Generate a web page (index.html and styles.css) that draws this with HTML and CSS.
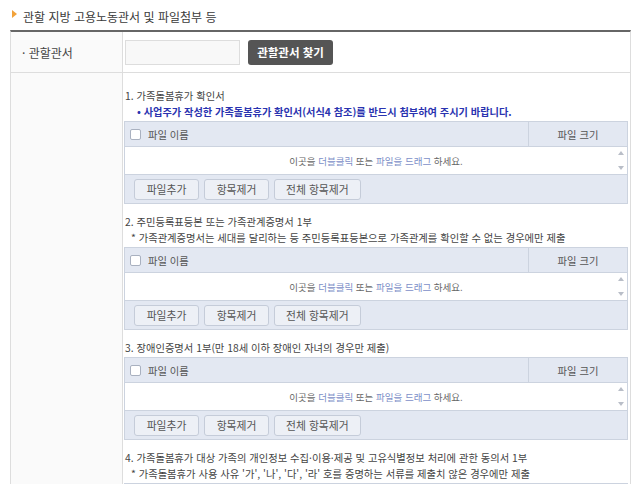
FILE: index.html
```html
<!DOCTYPE html>
<html lang="ko">
<head>
    <meta charset="UTF-8">
    <title>관할 지방 고용노동관서 및 파일첨부 등</title>
    <link rel="stylesheet" href="styles.css">
</head>
<body>
    <div class="page">
        <h2 class="sec-title">
            <svg class="bullet" width="5" height="8" viewBox="0 0 5 8"><polygon points="0,0 5,4 0,8" fill="#f2a23a"/></svg>
            관할 지방 고용노동관서 및 파일첨부 등
        </h2>

        <div class="form-table">
            <div class="row row-office">
                <div class="th">· 관할관서</div>
                <div class="td">
                    <input type="text" class="office-input">
                    <button type="button" class="btn-dark">관할관서 찾기</button>
                </div>
            </div>

            <div class="row">
                <div class="th"></div>
                <div class="td files">
                    <div class="doc">
                        <p class="doc-title">1. 가족돌봄휴가 확인서</p>
                        <p class="doc-note strong">• 사업주가 작성한 가족돌봄휴가 확인서(서식4 참조)를 반드시 첨부하여 주시기 바랍니다.</p>
                        <div class="uploader">
                            <div class="up-head">
                                <div class="chk-col"><span class="chk"></span></div>
                                <div class="name-col">파일 이름</div>
                                <div class="size-col">파일 크기</div>
                            </div>
                            <div class="up-drop">
                                <span>이곳을 <em>더블클릭</em> 또는 <em>파일을 드래그</em> 하세요.</span>
                                <div class="scroll"><i class="up"></i><i class="down"></i></div>
                            </div>
                            <div class="up-bar">
                                <button type="button">파일추가</button>
                                <button type="button">항목제거</button>
                                <button type="button">전체 항목제거</button>
                            </div>
                        </div>
                    </div>

                    <div class="doc">
                        <p class="doc-title">2. 주민등록표등본 또는 가족관계증명서 1부</p>
                        <p class="doc-note">* 가족관계증명서는 세대를 달리하는 등 주민등록표등본으로 가족관계를 확인할 수 없는 경우에만 제출</p>
                        <div class="uploader">
                            <div class="up-head">
                                <div class="chk-col"><span class="chk"></span></div>
                                <div class="name-col">파일 이름</div>
                                <div class="size-col">파일 크기</div>
                            </div>
                            <div class="up-drop">
                                <span>이곳을 <em>더블클릭</em> 또는 <em>파일을 드래그</em> 하세요.</span>
                                <div class="scroll"><i class="up"></i><i class="down"></i></div>
                            </div>
                            <div class="up-bar">
                                <button type="button">파일추가</button>
                                <button type="button">항목제거</button>
                                <button type="button">전체 항목제거</button>
                            </div>
                        </div>
                    </div>

                    <div class="doc">
                        <p class="doc-title">3. 장애인증명서 1부(만 18세 이하 장애인 자녀의 경우만 제출)</p>
                        <div class="uploader">
                            <div class="up-head">
                                <div class="chk-col"><span class="chk"></span></div>
                                <div class="name-col">파일 이름</div>
                                <div class="size-col">파일 크기</div>
                            </div>
                            <div class="up-drop">
                                <span>이곳을 <em>더블클릭</em> 또는 <em>파일을 드래그</em> 하세요.</span>
                                <div class="scroll"><i class="up"></i><i class="down"></i></div>
                            </div>
                            <div class="up-bar">
                                <button type="button">파일추가</button>
                                <button type="button">항목제거</button>
                                <button type="button">전체 항목제거</button>
                            </div>
                        </div>
                    </div>

                    <div class="doc">
                        <p class="doc-title">4. 가족돌봄휴가 대상 가족의 개인정보 수집·이용·제공 및 고유식별정보 처리에 관한 동의서 1부</p>
                        <p class="doc-note">* 가족돌봄휴가 사용 사유 '가', '나', '다', '라' 호를 증명하는 서류를 제출치 않은 경우에만 제출</p>
                        <div class="uploader"></div>
                    </div>
                </div>
            </div>
        </div>
    </div>
</body>
</html>
```

FILE: styles.css
```css
* {
    margin: 0;
    padding: 0;
    box-sizing: border-box;
}

body {
    font-family: "Noto Sans CJK KR", "Noto Sans", sans-serif;
    background-color: #fff;
    color: #444;
    overflow: hidden;
}

.page {
    padding: 6px 9px 0 10px;
}

.sec-title {
    display: flex;
    align-items: center;
    gap: 6px;
    height: 20px;
    padding-left: 2px;
    font-size: 12px;
    font-weight: normal;
    color: #3a3a3a;
    margin-bottom: 4px;
}

.bullet {
    margin-top: -4px;
}

.form-table {
    border-top: 2px solid #666;
    border-left: 1px solid #ddd;
    border-right: 1px solid #ddd;
}

.row {
    display: grid;
    grid-template-columns: 112px 1fr;
    border-bottom: 1px solid #ddd;
}

.th {
    background-color: #fafafa;
    border-right: 1px solid #ddd;
    font-size: 12px;
    color: #444;
    padding-left: 11px;
    display: flex;
    align-items: center;
}

.row-office {
    height: 41px;
}

.row-office .td {
    display: flex;
    align-items: center;
    padding-left: 2px;
    gap: 8px;
}

.office-input {
    width: 115px;
    height: 25px;
    border: 1px solid #ddd;
    background-color: #f8f8f8;
}

.btn-dark {
    height: 25px;
    width: 85px;
    border: none;
    border-radius: 3px;
    background-color: #555;
    color: #fff;
    font-family: inherit;
    font-size: 11.5px;
    font-weight: bold;
}

.files {
    padding: 15px 2px 0 1px;
}

.doc {
    margin-bottom: 10px;
}

.doc p {
    font-size: 10.3px;
    line-height: 16px;
    padding-left: 1px;
    white-space: nowrap;
}

.doc-note {
    text-indent: 6px;
}

.doc-note.strong {
    text-indent: 12px;
    font-weight: bold;
    font-size: 10.2px;
    color: #2a33b0;
}

.uploader {
    margin-top: 1px;
    min-height: 10px;
    border: 1px solid #ccd3df;
    font-size: 10.3px;
}

.up-head {
    display: flex;
    height: 25px;
    background-color: #e3e8f2;
    border-bottom: 1px solid #ccd3df;
    color: #555;
}

.chk-col {
    width: 23px;
    display: flex;
    align-items: center;
    padding-left: 5px;
}

.chk {
    width: 11px;
    height: 11px;
    background-color: #fff;
    border: 1px solid #a9b1c0;
    border-radius: 2px;
}

.name-col {
    flex: 1;
    display: flex;
    align-items: center;
}

.size-col {
    width: 99px;
    border-left: 1px solid #ccd3df;
    display: flex;
    align-items: center;
    justify-content: center;
}

.up-drop {
    height: 28px;
    display: flex;
    align-items: center;
    justify-content: center;
    position: relative;
    background-color: #fff;
    border-bottom: 1px solid #ccd3df;
    font-size: 9.5px;
    color: #666;
}

.up-drop em {
    font-style: normal;
    color: #7d8fc8;
}

.scroll {
    position: absolute;
    right: 2px;
    top: 4px;
    bottom: 4px;
    width: 9px;
    display: flex;
    flex-direction: column;
    justify-content: space-between;
    align-items: center;
}

.scroll i {
    width: 0;
    height: 0;
    border-left: 3px solid transparent;
    border-right: 3px solid transparent;
}

.scroll .up {
    border-bottom: 4px solid #b9bec8;
}

.scroll .down {
    border-top: 4px solid #b9bec8;
}

.up-bar {
    height: 28px;
    background-color: #e3e8f2;
    display: flex;
    align-items: center;
    gap: 5px;
    padding-left: 9px;
}

.up-bar button {
    height: 21px;
    padding: 0 11px;
    min-width: 65px;
    border: 1px solid #c5ccd9;
    border-radius: 3px;
    background-color: #edf0f6;
    color: #555;
    font-family: inherit;
    font-size: 10.8px;
}
```
